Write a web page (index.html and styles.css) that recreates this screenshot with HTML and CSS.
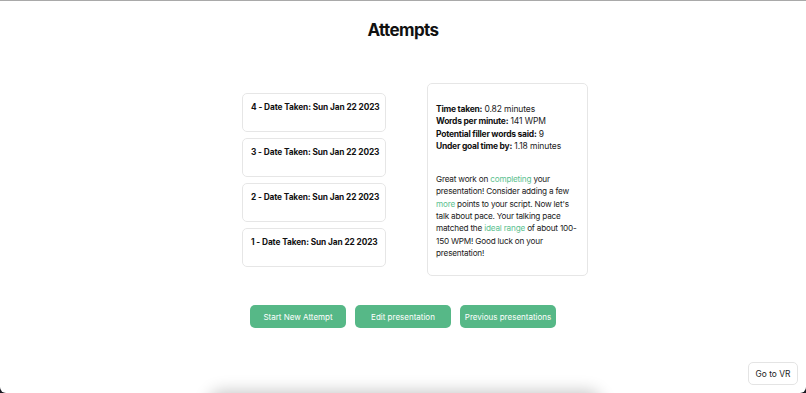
FILE: index.html
```html
<!DOCTYPE html>
<html>
<head>
<meta charset="utf-8">
<link rel="stylesheet" href="styles.css">
</head>
<body>
<div class="page">
  <h1 class="title">Attempts</h1>
  <div class="main">
    <div class="attempts">
      <div class="attempt">4 - Date Taken: Sun Jan 22 2023</div>
      <div class="attempt">3 - Date Taken: Sun Jan 22 2023</div>
      <div class="attempt">2 - Date Taken: Sun Jan 22 2023</div>
      <div class="attempt">1 - Date Taken: Sun Jan 22 2023</div>
    </div>
    <div class="details">
      <div class="stats">
        <div><b>Time taken:</b> 0.82 minutes</div>
        <div><b>Words per minute:</b> 141 WPM</div>
        <div><b>Potential filler words said:</b> 9</div>
        <div><b>Under goal time by:</b> 1.18 minutes</div>
      </div>
      <p class="feedback">Great work on <span class="hl">completing</span> your<br>presentation! Consider adding a few<br><span class="hl">more</span> points to your script. Now let's<br>talk about pace. Your talking pace<br>matched the <span class="hl">ideal range</span> of about 100-<br>150 WPM! Good luck on your<br>presentation!</p>
    </div>
  </div>
  <div class="actions">
    <button class="btn">Start New Attempt</button>
    <button class="btn">Edit presentation</button>
    <button class="btn">Previous presentations</button>
  </div>
  <div class="shadow-bar"></div>
  <button class="vr-btn">Go to VR</button>
</div>
</body>
</html>
```
FILE: styles.css
```css
html, body {
  margin: 0;
  padding: 0;
  background: #1a1a22;
}
body {
  font-family: Inter, "Liberation Sans", sans-serif;
  color: #111;
}
.page {
  position: relative;
  width: 806px;
  height: 393px;
  box-sizing: border-box;
  background: #fff;
  border-top: 1px solid #a9a9a9;
  border-radius: 0 0 6px 6px;
  overflow: hidden;
}
.title {
  margin: 19px 0 0;
  text-align: center;
  font-size: 17px;
  font-weight: 700;
  letter-spacing: -0.6px;
  line-height: 20px;
}
.main {
  display: flex;
  justify-content: center;
  align-items: center;
  gap: 41px;
  padding-left: 24px;
  margin-top: 43px;
}
.attempts {
  display: flex;
  flex-direction: column;
  gap: 6px;
}
.attempt {
  width: 144px;
  height: 39px;
  box-sizing: border-box;
  border: 1px solid #e6e6e6;
  border-radius: 5px;
  padding: 7px 8px 0;
  font-size: 8.3px;
  font-weight: 700;
  letter-spacing: -0.1px;
  line-height: 12px;
  white-space: nowrap;
}
.details {
  width: 161px;
  height: 193px;
  box-sizing: border-box;
  border: 1px solid #e6e6e6;
  border-radius: 5px;
  padding: 19px 8px 0;
  font-size: 8.5px;
  line-height: 12.3px;
  color: #222;
  white-space: nowrap;
}
.stats {
  letter-spacing: -0.1px;
}
.stats b {
  color: #111;
  font-weight: 700;
  letter-spacing: -0.25px;
}
.feedback {
  margin: 21px 0 0;
  font-size: 8.2px;
  letter-spacing: -0.2px;
}
.hl {
  color: #5cbf8f;
}
.actions {
  display: flex;
  justify-content: center;
  gap: 9px;
  margin-top: 29px;
}
.btn {
  width: 96px;
  height: 23px;
  border: none;
  border-radius: 5px;
  background: #56b887;
  color: #fff;
  font-family: Inter, "Liberation Sans", sans-serif;
  font-size: 8px;
  padding: 0;
}
.shadow-bar {
  position: absolute;
  left: 212px;
  top: 396px;
  width: 386px;
  height: 40px;
  background: #fff;
  box-shadow: 0 -3px 16px 3px rgba(0, 0, 0, 0.22);
  border-radius: 10px;
}
.vr-btn {
  position: absolute;
  right: 8px;
  bottom: 8px;
  width: 50px;
  height: 23px;
  background: #fff;
  border: 1px solid #e4e4e4;
  border-radius: 5px;
  font-family: Inter, "Liberation Sans", sans-serif;
  font-size: 8.4px;
  color: #222;
  padding: 0;
}
```
